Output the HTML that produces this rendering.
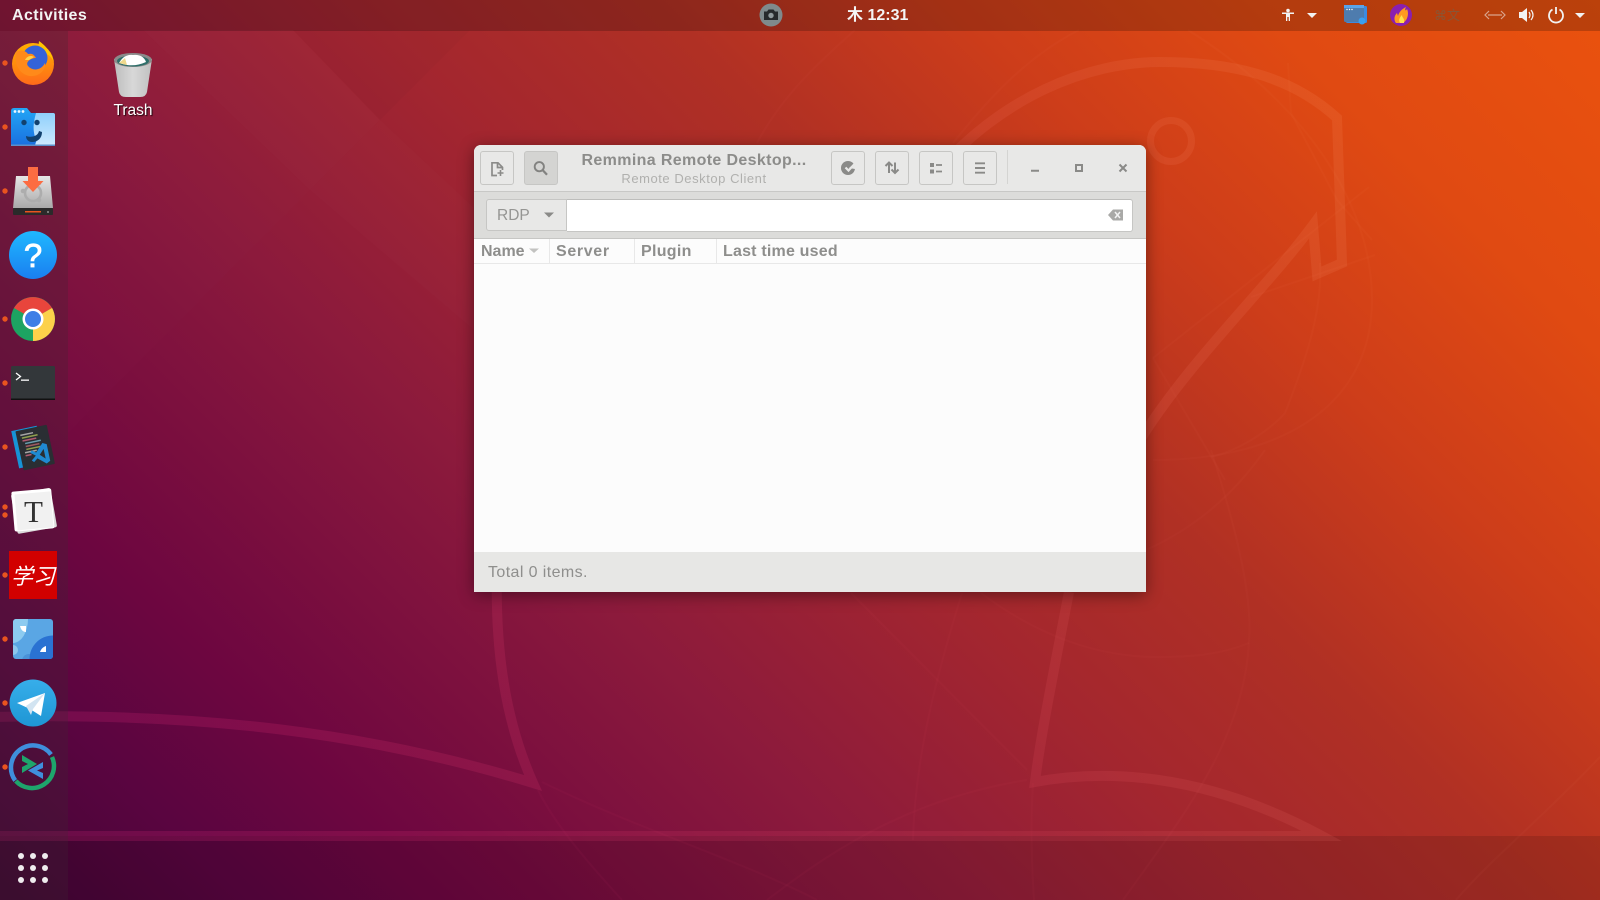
<!DOCTYPE html>
<html lang="en">
<head>
<meta charset="utf-8">
<title>Remmina on Ubuntu desktop</title>
<style>
html,body{margin:0;padding:0;width:1600px;height:900px;overflow:hidden;background:#7a1040}
body{font-family:"Liberation Sans","Noto Sans CJK SC",sans-serif;position:relative}
#bg{position:absolute;left:0;top:0;width:1600px;height:900px;background:
 linear-gradient(45deg,#420535 0%,#5a0540 10%,#6d0640 18%,#8c1a3c 36%,#a3262f 50%,#b03024 62%,#cd3d1a 74%,#e04a12 86%,#ea520e 100%)}
svg{position:absolute;left:0;top:0}
#dock{position:absolute;left:0;top:31px;width:68px;height:869px;background:rgba(62,42,52,.26)}
#panel{position:absolute;left:0;top:0;width:1600px;height:31px;background:rgba(0,0,0,.2)}
.ptxt{position:absolute;color:#f4f4f4;font-weight:700;font-size:16px;line-height:20px;white-space:nowrap}
.trash{position:absolute;left:93px;top:101px;width:80px;text-align:center;color:#fff;font-size:15.5px;line-height:20px;text-shadow:1px 1px 1px rgba(0,0,0,.8)}
#win{position:absolute;left:474px;top:145px;width:672px;height:447px;background:#fcfcfc;border-radius:7px 7px 0 0;box-shadow:0 3px 16px rgba(0,0,0,.42);overflow:hidden}
.abs{position:absolute}
.btn{position:absolute;top:6px;width:32px;height:32px;border:1px solid #c6c6c4;border-radius:3px;background:#e8e8e7}
.hd{position:absolute;top:94px;height:24px;line-height:26px;font-weight:700;font-size:16px;color:#8e8e8c;white-space:nowrap}
.sep{position:absolute;top:94px;width:1px;height:24px;background:#e8e8e8}
</style>
</head>
<body>
<div id="bg"></div>

<!-- wallpaper line art -->
<svg width="1600" height="900" viewBox="0 0 1600 900" fill="none">
 <defs>
  <linearGradient id="ln" gradientUnits="userSpaceOnUse" x1="0" y1="800" x2="1500" y2="100">
   <stop offset="0" stop-color="#ff2a8c" stop-opacity=".17"/>
   <stop offset=".55" stop-color="#ff5a70" stop-opacity=".12"/>
   <stop offset="1" stop-color="#ffc080" stop-opacity=".11"/>
  </linearGradient>
 </defs>
 <polygon points="143,30 293,30 380,120 310,190" fill="#fff" opacity=".016"/>
 <polygon points="293,30 470,30 380,120" fill="#000" opacity=".02"/>
 <polygon points="68,30 143,30 310,190 68,433" fill="#fff" opacity=".006"/>
 <polygon points="380,120 473,207 474,330 310,190" fill="#fff" opacity=".012"/>
 <rect x="0" y="836" width="1600" height="64" fill="#000" opacity=".12"/>

 <g stroke="url(#ln)" stroke-width="10" stroke-linejoin="miter" stroke-miterlimit="12">
  <path d="M930 180C1000 95 1090 62 1160 62C1230 62 1290 75 1337 118L1342 263L1317 274L1313 225C1265 290 1190 360 1140 440"/>
  <circle cx="1171" cy="141" r="20.5" stroke-width="7"/>
  <path d="M-5 717C200 712 370 733 533 783C505 720 495 650 497 570"/>
  <path d="M1069 592C1052 680 1040 740 1035 782C1100 770 1200 770 1322 836L-5 836"/>
 </g>
 <g stroke="url(#ln)" stroke-width="2" opacity=".3">
  <path d="M1188 30C1300 100 1372 200 1372 300C1372 400 1290 460 1153 460"/>
  <path d="M1079 30C1020 60 980 110 953 143"/>
  <path d="M855 30C810 70 780 100 757 143"/>
  <path d="M1288 63L1291 113L1337 200L1372 240"/>
  <path d="M1153 358L1369 187"/>
  <path d="M1153 358L1225 480"/>
  <path d="M1251 297L1375 255"/>
  <path d="M1320 263C1322 300 1314 340 1285 413C1270 430 1240 450 1211 457"/>
  <path d="M1211 450C1240 540 1252 600 1249 640C1245 740 1180 820 1123 900"/>
  <path d="M1265 450C1230 500 1190 530 1146 550"/>
  <path d="M981 593C1030 630 1090 657 1157 657C1190 657 1220 655 1249 643"/>
  <path d="M962 593C935 680 915 760 913 840"/>
  <path d="M851 593L1027 770"/>
  <path d="M767 900C820 860 900 800 1027 780"/>
  <path d="M542 782C640 830 740 860 817 900"/>
  <path d="M538 790C555 825 590 865 622 900"/>
  <path d="M1033 783C1030 830 1032 870 1034 900"/>
  <path d="M1600 757C1540 820 1490 860 1456 900"/>
 </g>
</svg>

<div id="dock"></div>
<div id="panel"></div>

<!-- desktop trash & dock icons -->
<svg width="1600" height="900" viewBox="0 0 1600 900">
 <defs>
  <linearGradient id="ffo" x1="0" y1="0" x2="0" y2="1"><stop offset="0" stop-color="#ffb000"/><stop offset="1" stop-color="#ff6a1a"/></linearGradient>
  <linearGradient id="fnd" x1="0" y1="0" x2="0" y2="1"><stop offset="0" stop-color="#22a6f5"/><stop offset="1" stop-color="#1a6fe0"/></linearGradient>
  <linearGradient id="fnl" x1="0" y1="0" x2="0" y2="1"><stop offset="0" stop-color="#8fd0fb"/><stop offset="1" stop-color="#cfeaff"/></linearGradient>
  <linearGradient id="hdd" x1="0" y1="0" x2="0" y2="1"><stop offset="0" stop-color="#e6e6e6"/><stop offset="1" stop-color="#a9a9a9"/></linearGradient>
  <linearGradient id="hlp" x1="0" y1="0" x2="0" y2="1"><stop offset="0" stop-color="#1fb8ff"/><stop offset="1" stop-color="#1a7ff0"/></linearGradient>
  <linearGradient id="tg" x1="0" y1="0" x2="0" y2="1"><stop offset="0" stop-color="#37aeea"/><stop offset="1" stop-color="#1e96d4"/></linearGradient>
  <linearGradient id="tr" x1="0" y1="0" x2="1" y2="0"><stop offset="0" stop-color="#bdbdbd"/><stop offset=".5" stop-color="#d8d8d8"/><stop offset="1" stop-color="#c0c0c0"/></linearGradient>
 </defs>

 <!-- trash -->
 <path d="M114 59L119 92Q120 97 126 97H140Q146 97 147 92L152 59Z" fill="url(#tr)"/>
 <ellipse cx="133" cy="60" rx="19" ry="7" fill="#8b8b8b"/>
 <ellipse cx="133" cy="61" rx="16" ry="5.500" fill="#2f6f6a"/>
 <path d="M119 63Q124 54 133 55Q143 54 146 62Q133 68 119 63Z" fill="#fff"/>
 <path d="M119 63L125 58L127 65Z" fill="#efd98c"/>

 <!-- dots -->
 <g fill="#e9541f">
  <circle cx="5" cy="63" r="2.700"/><circle cx="5" cy="127" r="2.700"/><circle cx="5" cy="191" r="2.700"/>
  <circle cx="5" cy="319" r="2.700"/><circle cx="5" cy="383" r="2.700"/><circle cx="5" cy="447" r="2.700"/>
  <circle cx="5" cy="507" r="2.700"/><circle cx="5" cy="515" r="2.700"/><circle cx="5" cy="575" r="2.700"/>
  <circle cx="5" cy="639" r="2.700"/><circle cx="5" cy="703" r="2.700"/><circle cx="5" cy="767" r="2.700"/>
 </g>

 <!-- firefox -->
 <circle cx="33" cy="64" r="21" fill="url(#ffo)"/>
 <path d="M39 41C43 44 51 50 54 62C50 54 46 54 43 52C40 50 38 46 39 41Z" fill="#ffc400"/>
 <circle cx="35" cy="58" r="12.500" fill="#3463d8"/>
 <path d="M16 52C13 66 22 77 33 76C42 75 46 68 45 63C41 71 32 71 28 66C25 62 31 58 36 58C34 55 33 53 28 54C26 51 21 49 16 52Z" fill="#ff8a1a"/>
 <path d="M25 60C27 56 31 55 34 57L29 60Z" fill="#ffd24a"/>

 <!-- finder -->
 <path d="M11 111Q11 108 14 108H27L31 113H53Q55 113 55 115V144Q55 146 53 146H13Q11 146 11 144Z" fill="url(#fnd)"/>
 <path d="M36 113H53Q55 113 55 115V144Q55 146 53 146H35C36 140 38 138 40 137H35C33 130 33 124 36 113Z" fill="url(#fnl)"/>
 <rect x="11" y="144.500" width="44" height="1.500" fill="#5d8fc9"/>
 <g fill="#eaf6ff"><circle cx="15" cy="111.500" r="1.400"/><circle cx="19" cy="111.500" r="1.400"/><circle cx="23" cy="111.500" r="1.400"/></g>
 <circle cx="24" cy="122.500" r="2.700" fill="#12416e"/><circle cx="37" cy="122.500" r="2.700" fill="#12416e"/>
 <path d="M26 136C32 138 38 136 39 131L42 132C42 138 38 142 32 142C28 142 26 139 26 136Z" fill="#12416e"/>

 <!-- installer -->
 <path d="M16 176H50L53 208H13Z" fill="url(#hdd)"/>
 <rect x="13" y="208" width="40" height="7" rx="1" fill="#2a2a2a"/>
 <rect x="25" y="211" width="16" height="1.500" fill="#e9541f"/>
 <rect x="47" y="211" width="2" height="2" fill="#777"/>
 <circle cx="33" cy="193" r="8" fill="none" stroke="#adadad" stroke-width="2.600"/>
 <circle cx="23" cy="191" r="2.300" fill="#adadad"/><circle cx="39" cy="200" r="2.300" fill="#adadad"/><circle cx="39" cy="183" r="2.300" fill="#adadad"/>
 <path d="M28 167H38V181H43.500L33 192L22.500 181H28Z" fill="#fc6c42"/>

 <!-- help -->
 <circle cx="33" cy="255" r="24" fill="url(#hlp)"/>
 <text x="33" y="267" text-anchor="middle" font-family="Liberation Sans,sans-serif" font-size="33" fill="#fff" stroke="#fff" stroke-width=".8">?</text>

 <!-- chrome -->
 <circle cx="33" cy="319" r="22" fill="#1da462"/>
 <path d="M33 319L14 308A22 22 0 0 1 52 308Z" fill="#e8453c"/>
 <path d="M33 319L52 308A22 22 0 0 1 33 341Z" fill="#fcd14a"/>
 <path d="M33 319H52L52 308A22 22 0 0 1 54 313Z" fill="#fcd14a"/>
 <circle cx="33" cy="319" r="10.500" fill="#fff"/>
 <circle cx="33" cy="319" r="8" fill="#3e7ee6"/>

 <!-- terminal -->
 <rect x="11" y="366" width="44" height="34" rx="1.500" fill="#33373a"/>
 <rect x="11" y="398.500" width="44" height="1.500" fill="#111"/>
 <path d="M16 373L20.500 376.500L16 380" fill="none" stroke="#fff" stroke-width="1.300"/>
 <rect x="21" y="379.500" width="8" height="1.300" fill="#fff"/>

 <!-- vscode -->
 <g transform="rotate(-12 33 447)">
  <rect x="15" y="427" width="26" height="38" fill="#1793d6"/>
  <rect x="19" y="428" width="32" height="40" rx="1" fill="#2a2e33"/>
  <g stroke-width="1.500">
   <path d="M23 433H36" stroke="#a4a4a4"/><path d="M24 436H40" stroke="#8fa04e"/><path d="M24 439H38" stroke="#b25a70"/>
   <path d="M26 442H42" stroke="#6a9fb0"/><path d="M26 445H40" stroke="#a05a60"/><path d="M26 448H42" stroke="#8fa04e"/>
   <path d="M24 451H36" stroke="#a4a4a4"/><path d="M24 454H30" stroke="#b25a70"/>
  </g>
  <path d="M47 447L43 445L35 453L31 450L29 452L34 456L29 460L31 462L35 459L43 466L47 464ZM43 451V461L38 456Z" fill="#1f8ad2"/>
 </g>

 <!-- typora -->
 <rect x="14" y="491" width="40" height="40" rx="2" fill="#dcdcdc" transform="rotate(-10 33 511)"/>
 <rect x="13" y="490" width="40" height="40" rx="2" fill="#fff" transform="rotate(-5 33 511)"/>
 <rect x="16" y="493" width="36" height="36" fill="#f1f1f1" transform="rotate(-5 33 511)"/>
 <text x="33.500" y="522" text-anchor="middle" font-family="Liberation Serif,serif" font-size="31" fill="#333">T</text>

 <!-- red app -->
 <rect x="9" y="551" width="48" height="48" fill="#d20000"/>
 <text x="33" y="584" text-anchor="middle" font-family="WenQuanYi Zen Hei,Noto Sans CJK SC,sans-serif" font-size="22" font-style="italic" fill="#fff">学习</text>

 <!-- blue tile -->
 <clipPath id="bt"><rect x="13" y="619" width="40" height="40" rx="3"/></clipPath>
 <g clip-path="url(#bt)">
  <rect x="13" y="619" width="40" height="40" fill="#5aa6e4"/>
  <circle cx="13" cy="650" r="5" fill="#8cc8ee"/>
  <circle cx="29" cy="661" r="7" fill="#4a92d8"/>
  <ellipse cx="13" cy="619" rx="15" ry="24" fill="#8ccbf0"/>
  <circle cx="53" cy="659" r="23.500" fill="#2a72d2"/>
  <path d="M20 626H26V632C23 632 21 630 20 626Z" fill="#fff"/>
  <path d="M46 646V652H40C41 649 43 647 46 646Z" fill="#fff"/>
 </g>

 <!-- telegram -->
 <circle cx="33" cy="703" r="23.500" fill="url(#tg)"/>
 <path d="M17 703L45 693L41 716L30 709Z" fill="#fff"/>
 <path d="M26 706L31 715L33 709L45 693Z" fill="#d2e4f1"/>

 <!-- remmina -->
 <path d="M15.200 780.500A22 22 0 0 1 51 754.500" fill="none" stroke="#3f8fdc" stroke-width="4.500"/>
 <path d="M15.800 781A22 22 0 0 0 52 757" fill="none" stroke="#1ea56c" stroke-width="4.500"/>
 <path d="M22 755L37 764L22 773V767L28 764L22 761Z" fill="#1ea56c"/>
 <path d="M43 762L28 770.500L43 779V773L37 770.500L43 768Z" fill="#3f8fdc"/>

 <!-- grid -->
 <g fill="#efecee">
  <circle cx="21" cy="856" r="3"/><circle cx="33" cy="856" r="3"/><circle cx="45" cy="856" r="3"/>
  <circle cx="21" cy="868" r="3"/><circle cx="33" cy="868" r="3"/><circle cx="45" cy="868" r="3"/>
  <circle cx="21" cy="880" r="3"/><circle cx="33" cy="880" r="3"/><circle cx="45" cy="880" r="3"/>
 </g>

 <!-- panel icons -->
 <circle cx="771" cy="15" r="11.500" fill="#7f8a8c"/>
 <path d="M764 11.500H767L768.500 9.500H773.500L775 11.500H778V20H764Z" fill="#262a2c"/>
 <circle cx="771" cy="15.500" r="2.700" fill="#8f999b"/>

 <g fill="#f2f2f2">
  <circle cx="1288" cy="10.500" r="1.800"/>
  <path d="M1282 12.500H1294V14H1290V21H1288.700V17H1287.300V21H1286V14H1282Z"/>
  <path d="M1307 13H1317L1312 18Z"/>
  <path d="M1575 13H1585L1580 18Z"/>
  <path d="M1519 12H1522L1527 8V22L1522 18H1519Z"/>
 </g>
 <path d="M1529 12Q1531 15 1529 18M1531 10Q1535 15 1531 20" fill="none" stroke="#f2f2f2" stroke-width="1.200"/>
 <path d="M1552.500 9.500A7 7 0 1 0 1559.500 9.500M1556 7V14" fill="none" stroke="#f2f2f2" stroke-width="1.800"/>

 <rect x="1346" y="6" width="21" height="17" rx="1.500" fill="#3c8be0"/>
 <rect x="1344" y="5" width="20" height="17" rx="1.500" fill="#4e7cae"/>
 <rect x="1344" y="5" width="20" height="3" fill="#5aa3e8"/>
 <g fill="#fff"><circle cx="1347" cy="9.500" r=".7"/><circle cx="1349.500" cy="9.500" r=".7"/><circle cx="1352" cy="9.500" r=".7"/></g>
 <circle cx="1362" cy="21" r="3.500" fill="#3aa0f0"/>

 <circle cx="1401" cy="15" r="11" fill="#8a1fb0"/>
 <path d="M1396 23C1393 19 1395 15 1397 13L1398 16C1399 12 1402 9 1406 7C1404 11 1406 11 1407 9C1409 13 1408 20 1403 23Z" fill="#ff9a1f"/>
 <path d="M1400 23C1398 20 1400 17 1402 15C1402 18 1405 18 1404 23Z" fill="#ffe14a"/>

 <text x="1447" y="20" text-anchor="middle" font-family="DejaVu Sans,Noto Sans CJK SC,sans-serif" font-size="13" fill="#8a5535">⌘文</text>
 <path d="M1489 11L1485 15L1489 19M1501 11L1505 15L1501 19M1488 15H1502" fill="none" stroke="#d9a48c" stroke-width="1.200"/>
</svg>

<div class="ptxt" style="left:12px;top:6px;letter-spacing:.4px">Activities</div>
<div class="ptxt" style="left:847px;top:6px">木 12:31</div>
<div class="trash">Trash</div>

<!-- window -->
<div id="win">
 <div class="abs" style="left:0;top:0;width:672px;height:46px;background:#e8e8e7;border-bottom:1px solid #c8c8c6"></div>
 <div class="abs" style="left:0;top:47px;width:672px;height:46px;background:#dcdcda;border-bottom:1px solid #c6c6c4"></div>
 <div class="abs" style="left:0;top:118px;width:672px;height:1px;background:#e8e8e8"></div>
 <div class="abs" style="left:0;top:407px;width:672px;height:40px;background:#e7e7e5"></div>

 <div class="btn" style="left:6px"></div>
 <div class="btn" style="left:50px;background:#d4d4d2"></div>
 <div class="btn" style="left:357px"></div>
 <div class="btn" style="left:401px"></div>
 <div class="btn" style="left:445px"></div>
 <div class="btn" style="left:489px"></div>
 <div class="abs" style="left:533px;top:5px;width:1px;height:34px;background:#d4d4d2"></div>

 <div class="abs" style="left:81px;top:6px;width:278px;text-align:center;font-weight:700;font-size:16px;line-height:20px;color:#8c8c8a;letter-spacing:.36px;white-space:nowrap">Remmina Remote Desktop...</div>
 <div class="abs" style="left:81px;top:25px;width:278px;text-align:center;font-size:13px;line-height:17px;color:#b0b0ae;letter-spacing:.55px;white-space:nowrap">Remote Desktop Client</div>

 <!-- combo + entry -->
 <div class="abs" style="left:12px;top:54px;width:81px;height:32px;box-sizing:border-box;background:#e8e8e7;border:1px solid #c6c6c4;border-radius:3px 0 0 3px"></div>
 <div class="abs" style="left:23px;top:61px;font-size:15.5px;line-height:20px;color:#959593">RDP</div>
 <div class="abs" style="left:93px;top:54px;width:566px;height:33px;box-sizing:border-box;background:#fff;border:1px solid #c6c6c4;border-left:none;border-top-color:#bdbdbb;border-radius:0 3px 3px 0"></div>

 <div class="hd" style="left:7px">Name</div><div class="sep" style="left:75px"></div>
 <div class="hd" style="left:82px;letter-spacing:.65px">Server</div><div class="sep" style="left:160px"></div>
 <div class="hd" style="left:167px;letter-spacing:.3px">Plugin</div><div class="sep" style="left:242px"></div>
 <div class="hd" style="left:249px;letter-spacing:.2px">Last time used</div>

 <div class="abs" style="left:14px;top:418px;font-size:16px;line-height:20px;color:#8f8f8d;letter-spacing:.4px;white-space:nowrap">Total 0 items.</div>

 <svg width="672" height="447" viewBox="0 0 672 447" fill="none">
  <!-- new -->
  <path d="M23 30.500H18V17.800H24L28.500 22.300V25M23.500 17.800V22.500H28.500" stroke="#8b8b89" stroke-width="1.700"/>
  <path d="M26.500 25V31M23.500 28H29.500" stroke="#8b8b89" stroke-width="1.600"/>
  <!-- search -->
  <circle cx="65.300" cy="21.700" r="4.600" stroke="#828280" stroke-width="1.900"/>
  <path d="M68.800 25.200L73 29.700" stroke="#828280" stroke-width="2.200"/>
  <!-- refresh/check -->
  <circle cx="374" cy="23" r="7" fill="#8a8a88"/>
  <path d="M382 17L375 23L381 24Z" fill="#e8e8e7"/>
  <path d="M371.500 22.500L374.500 25.500L381 18.500" stroke="#e8e8e7" stroke-width="2.200"/>
  <!-- arrows -->
  <path d="M415 28V17.500M411.500 21L415 17.500L418.500 21" stroke="#8a8a88" stroke-width="2"/>
  <path d="M421 17.500V28M417.500 24.500L421 28L424.500 24.500" stroke="#8a8a88" stroke-width="2"/>
  <!-- list -->
  <path d="M456 18H460V22H456ZM456 24.500H460V28.500H456Z" fill="#8a8a88"/>
  <path d="M462 20H468M462 26.500H468" stroke="#8a8a88" stroke-width="1.800"/>
  <!-- menu -->
  <path d="M501 18.300H511M501 23H511M501 27.700H511" stroke="#8a8a88" stroke-width="1.900"/>
  <!-- wm -->
  <path d="M557 25.700H565" stroke="#8a8a88" stroke-width="2"/>
  <rect x="602" y="20" width="6" height="6" stroke="#8a8a88" stroke-width="2"/>
  <path d="M645.500 19.500L652.500 26.500M652.500 19.500L645.500 26.500" stroke="#8a8a88" stroke-width="2"/>
  <!-- combo arrow + backspace -->
  <path d="M70 67.500H80L75 72.500Z" fill="#8a8a88"/>
  <path d="M634 70L639 64.500H649V75.500H639Z" fill="#a9a9a7"/>
  <path d="M641 67L646 73M646 67L641 73" stroke="#f3f3f3" stroke-width="1.500"/>
  <!-- sort arrow -->
  <path d="M55 103.500H65L60 108Z" fill="#c2c2c0"/>
 </svg>
</div>
</body>
</html>
